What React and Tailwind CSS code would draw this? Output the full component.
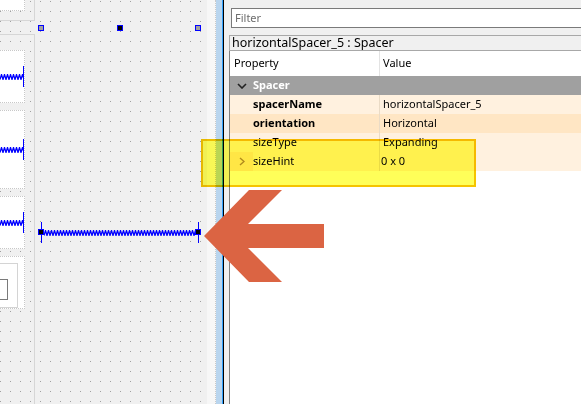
import React from 'react';

// blue zig-zag that Qt Designer draws for a spacer
function Spring({ w }) {
  let d = 'M0 5.5';
  for (let x = 0; x < w; x += 3) d += ` L${x + 1.5} 0.5 L${x + 3} 5.5`;
  return (
    <svg width={w} height={6} className="block shrink-0">
      <path d={d} fill="none" stroke="#0000ff" strokeWidth="1.3" />
    </svg>
  );
}

function SpacerBox({ h }) {
  return (
    <div className={`flex items-center w-[25px] bg-white border-y border-r border-dotted border-[#c8c8c8] ${h}`}>
      <Spring w={23} />
      <div className="w-px h-[21px] bg-[#0000ff]" />
    </div>
  );
}

function Handle({ fill }) {
  return <div className={`w-[6px] h-[6px] border border-[#0000ff] ${fill}`} />;
}

function EndHandle() {
  return (
    <div className="relative flex justify-center w-[6px] h-[21px]">
      <div className="w-px h-full bg-[#0000ff]" />
      <div className="absolute left-0 top-[7px] w-[6px] h-[6px] border border-[#0000ff] bg-black" />
    </div>
  );
}

const rows = [
  { name: 'spacerName', value: 'horizontalSpacer_5', bold: true, bg: 'bg-[#fff1df]', branch: 'bg-[#fff1df]' },
  { name: 'orientation', value: 'Horizontal', bold: true, bg: 'bg-[#ffe6c4]', branch: 'bg-[#ffe6c4]' },
  { name: 'sizeType', value: 'Expanding', bold: false, bg: 'bg-[#fff1df]', branch: 'bg-[#fff1df]' },
  { name: 'sizeHint', value: '0 x 0', bold: false, bg: 'bg-[#fff1df]', branch: 'bg-[#ffe6c4]', expand: true },
];

export default function App() {
  return (
    <div className="relative flex w-[581px] h-[404px] overflow-hidden bg-[#f0f0f0] font-['Noto_Sans',sans-serif] text-[11px] text-black">
      {/* FORM CANVAS */}
      <div className="flex w-[216px] shrink-0 h-full">
        <div className="flex w-[207px] h-full bg-[#f0f0f0] bg-[conic-gradient(at_1px_1px,transparent_75%,#a0a0a0_0)] bg-[length:10px_10px] bg-[position:0px_1px]">
          {/* left column of group frames */}
          <div className="flex flex-col w-[35px] shrink-0 h-full">
            <div className="h-[21px] border-b border-r border-[#d6d6d6]">
              <div className="w-[25px] h-[11px] bg-white border-b border-r border-dotted border-[#c8c8c8]" />
            </div>
            <div className="flex-1 mt-[13px] border-t border-r border-[#d6d6d6] pt-[15px] flex flex-col gap-[7px]">
              <SpacerBox h="h-[53px]" />
              <SpacerBox h="h-[79px]" />
              <SpacerBox h="h-[53px]" />
              <div className="w-[25px] h-[53px] bg-white border-y border-r border-dotted border-[#c8c8c8] pt-[6px]">
                <div className="w-[18px] h-[45px] border-y border-r border-[#d4d4d4] pt-[15px]">
                  <div className="w-[8px] h-[21px] border-y border-r border-[#7a7a7a]" />
                </div>
              </div>
            </div>
          </div>

          {/* selected layout */}
          <div className="flex flex-col flex-1 pt-[25px] pl-[3px]">
            <div className="flex justify-between w-[163px]">
              <Handle fill="bg-[#a0a0a0]" />
              <Handle fill="bg-black" />
              <Handle fill="bg-[#a0a0a0]" />
            </div>
            <div className="flex items-center w-[163px] mt-[191px]">
              <EndHandle />
              <Spring w={151} />
              <EndHandle />
            </div>
          </div>
        </div>
        <div className="w-[9px] h-full bg-[#f7f7f7] border-r border-dotted border-[#c8c8c8]" />
      </div>

      {/* SPLITTER */}
      <div className="w-[6px] shrink-0 h-full bg-[#b9d5ee]" />
      <div className="w-px shrink-0 h-full bg-[#33a3ff]" />
      <div className="w-px shrink-0 h-full bg-black" />

      {/* PROPERTY EDITOR */}
      <div className="flex flex-col w-[400px] shrink-0 h-full pl-[5px] pt-[8px] bg-[#f0f0f0]">
        <div className="ml-[2px] h-[20px] border border-[#7a7a7a] bg-white flex items-center pl-[3px] text-[#6d6d6d]">
          Filter
        </div>
        <div className="mt-[7px] h-[16px] border-y border-l border-[#a8a8a8] flex items-center pl-[2px] text-[12.5px] leading-none">
          horizontalSpacer_5 : Spacer
        </div>
        <div className="flex-1 flex flex-col border-l border-[#808080] bg-white">
          <div className="flex h-[25px]">
            <div className="w-[150px] border-r border-[#e3e3e3] flex items-center pl-[4px]">Property</div>
            <div className="flex items-center pl-[3px]">Value</div>
          </div>
          <div className="flex items-center h-[19px] bg-[#a0a0a0]">
            <div className="w-[23px] flex justify-center">
              <svg width="10" height="6" viewBox="0 0 10 6" className="block">
                <path d="M1 1 L5 5 L9 1" fill="none" stroke="#222" strokeWidth="1.6" />
              </svg>
            </div>
            <span className="font-bold text-white">Spacer</span>
          </div>
          {rows.map((r) => (
            <div key={r.name} className={`flex h-[19px] ${r.bg}`}>
              <div className="w-[150px] flex border-r border-[#eadbc6]">
                <div className={`w-[23px] flex items-center justify-center ${r.branch}`}>
                  {r.expand && (
                    <svg width="6" height="9" viewBox="0 0 6 9" className="block">
                      <path d="M1 1 L5 4.5 L1 8" fill="none" stroke="#b08a50" strokeWidth="1.4" />
                    </svg>
                  )}
                </div>
                <div className={`flex items-center ${r.bold ? 'font-bold' : ''}`}>{r.name}</div>
              </div>
              <div className={`flex items-center ${r.expand ? 'pl-[1px]' : 'pl-[3px]'}`}>{r.value}</div>
            </div>
          ))}
        </div>
      </div>

      {/* highlight box */}
      <div className="absolute left-[201px] top-[139px] w-[275px] h-[48px] border-2 border-[#f5c400] bg-[#ffff00]/65 mix-blend-multiply" />

      {/* big arrow */}
      <svg className="absolute left-[204px] top-[190px]" width="120" height="92" viewBox="0 0 120 92">
        <polygon points="0,46 45,0 78,0 44,34 120,34 120,58 44,58 78,92 45,92" fill="#db6443" />
      </svg>
    </div>
  );
}
